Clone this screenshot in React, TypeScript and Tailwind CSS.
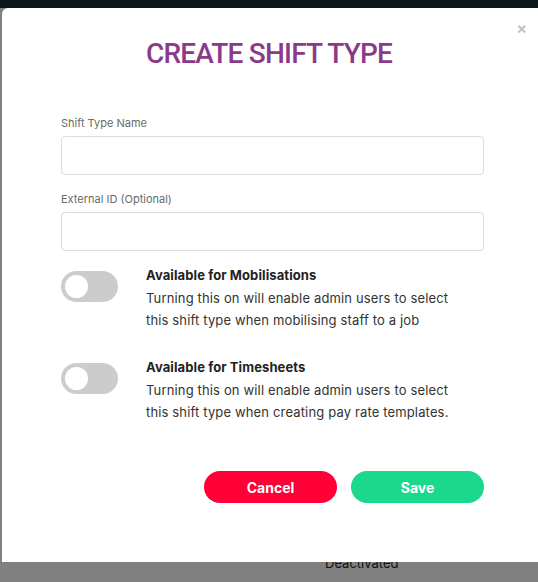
import React from "react";

const Toggle = () => (
  <div className="w-[57px] h-[31px] rounded-full bg-[#cccccc] flex items-center pl-[4px] shrink-0">
    <div className="w-[23px] h-[23px] rounded-full bg-white" />
  </div>
);

const Row = ({ title, l1, l2 }: { title: string; l1: string; l2: string }) => (
  <div className="flex">
    <div className="w-[85px] pt-[5px]">
      <Toggle />
    </div>
    <div className="text-[13px] leading-[22px] text-[#333] tracking-[0.15px]">
      <div className="font-bold text-[#222] leading-[18px] mb-[3px] tracking-[0.1px]">{title}</div>
      <div>{l1}</div>
      <div>{l2}</div>
    </div>
  </div>
);

export default function App() {
  return (
    <div className="relative w-[538px] h-[582px] bg-[#808080] overflow-hidden" style={{ fontFamily: "Inter, 'Noto Sans', sans-serif" }}>
      <div className="h-[8px] bg-[#0c171d]" />
      <div className="relative z-10 ml-[2px] w-[540px] h-[554px] bg-white rounded-tl-[6px]">
        <div className="absolute right-[15px] top-[12px] text-[#c4c4c4] text-[16px] font-bold leading-none">×</div>
        <div className="pt-[26px] flex justify-center pr-[6px]">
          <h1 className="text-[#8b3a8a] text-[28px] leading-[40px] font-medium tracking-[-0.8px]" style={{ fontFamily: "Roboto, sans-serif" }}>
            CREATE SHIFT TYPE
          </h1>
        </div>
        <div className="pl-[59px] pr-[58px] pt-[42px]">
          <label className="block text-[11px] text-[#6a6a6a] leading-[14px]">Shift Type Name</label>
          <div className="mt-[6px] h-[39px] rounded-[4px] border border-[#dcdcdc]" />
          <label className="block mt-[17px] text-[11px] text-[#6a6a6a] leading-[14px]">External ID (Optional)</label>
          <div className="mt-[6px] h-[39px] rounded-[4px] border border-[#dcdcdc]" />
          <div className="mt-[15px]">
            <Row
              title="Available for Mobilisations"
              l1="Turning this on will enable admin users to select"
              l2="this shift type when mobilising staff to a job"
            />
          </div>
          <div className="mt-[27px]">
            <Row
              title="Available for Timesheets"
              l1="Turning this on will enable admin users to select"
              l2="this shift type when creating pay rate templates."
            />
          </div>
          <div className="mt-[48px] flex justify-end gap-[14px]">
            <button className="w-[133px] h-[32px] rounded-full bg-[#ff0037] text-white text-[14px] font-bold">Cancel</button>
            <button className="w-[133px] h-[32px] rounded-full bg-[#1bd98c] text-white text-[14px] font-bold">Save</button>
          </div>
        </div>
      </div>
      <div className="-mt-[8px] pl-[325px] text-[13px] leading-[18px] text-[#111]">Deactivated</div>
    </div>
  );
}
